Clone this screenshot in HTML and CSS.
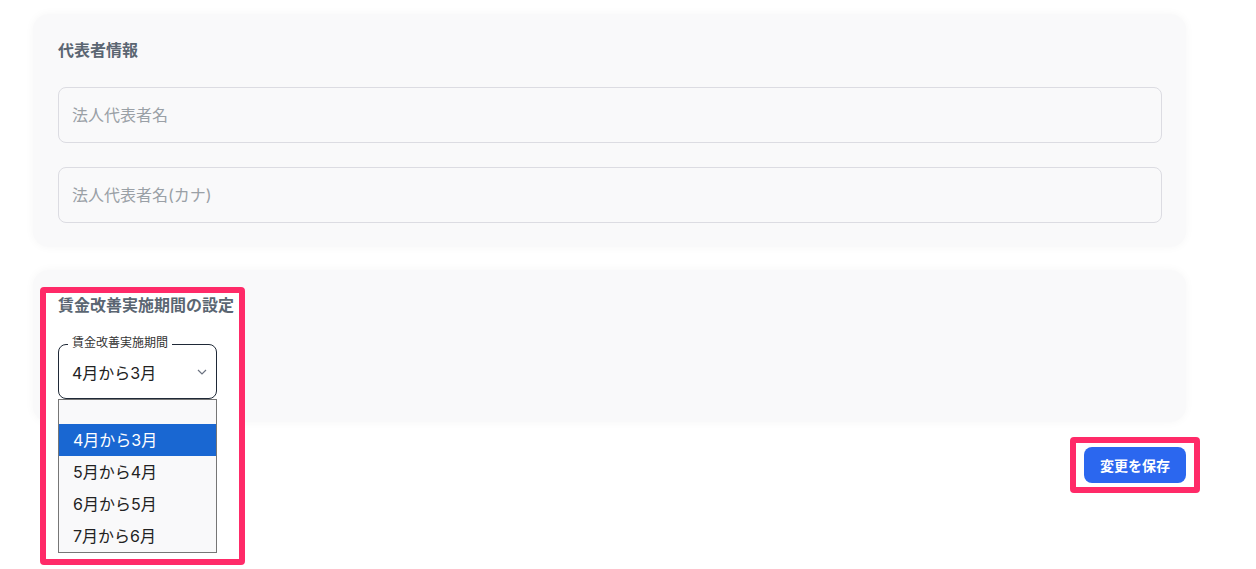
FILE: index.html
```html
<!DOCTYPE html>
<html>
<head>
    <title>設定</title>
    <link rel="stylesheet" href="styles.css">
</head>
<body>
    <div class="page">
        <section class="card">
            <h3 class="card-title">代表者情報</h3>
            <div class="field">
                <input type="text" placeholder="法人代表者名">
            </div>
            <div class="field">
                <input type="text" placeholder="法人代表者名(カナ)">
            </div>
        </section>

        <section class="card card-period">
            <h3 class="card-title above">賃金改善実施期間の設定</h3>
            <div class="select-wrap above">
                <span class="select-label">賃金改善実施期間</span>
                <div class="select-box">
                    <span class="select-value">4月から3月</span>
                    <svg class="chevron" width="10" height="6" viewBox="0 0 10 6">
                        <path d="M1 1l4 4 4-4" fill="none" stroke="#6b7280" stroke-width="1.2"/>
                    </svg>
                </div>
                <ul class="options">
                    <li class="option empty"></li>
                    <li class="option selected">4月から3月</li>
                    <li class="option">5月から4月</li>
                    <li class="option">6月から5月</li>
                    <li class="option">7月から6月</li>
                </ul>
            </div>
            <div class="mark mark-select"></div>
        </section>

        <div class="actions">
            <button class="save-btn above" type="button">変更を保存</button>
            <div class="mark mark-save"></div>
        </div>
    </div>
</body>
</html>
```

FILE: styles.css
```css
html,
body {
    height: 100%;
}

body {
    margin: 0;
    background: #fff;
    font-family: Inter, "Noto Sans CJK JP", sans-serif;
    color: #222;
}

.page {
    width: 1153px;
    padding: 14px 0 0 33px;
}

.card {
    background: #f9f9fa;
    border-radius: 16px;
    box-shadow: 0 0 10px rgba(0,0,0,0.04);
    padding: 26px 24px 24px 25px;
}

.card-title {
    margin: 0;
    font-size: 16px;
    line-height: 20px;
    font-weight: bold;
    color: #5b6672;
}

.field {
    margin-top: 27px;
}

.field + .field {
    margin-top: 24px;
}

.field input {
    display: block;
    box-sizing: border-box;
    width: 100%;
    height: 56px;
    padding: 0 13px;
    border: 1px solid #dcdce2;
    border-radius: 8px;
    background: #f9f9fa;
    font-family: inherit;
    font-size: 16px;
}

.field input::placeholder {
    color: #9aa0a6;
}

/* period card */
.card-period {
    margin-top: 23px;
    padding-top: 25px;
    padding-bottom: 23px;
    position: relative;
}

.above {
    position: relative;
    z-index: 2;
}

.select-wrap {
    width: 159px;
    margin-top: 29px;
}

.select-box {
    box-sizing: border-box;
    height: 55px;
    border: 1px solid #1f2937;
    border-radius: 8px;
    display: flex;
    align-items: center;
    justify-content: space-between;
    padding: 0 9px 0 13px;
}

.select-value {
    font-size: 16px;
}

.select-label {
    position: absolute;
    left: 10px;
    top: -9px;
    padding: 0 4px;
    background: #fff;
    font-size: 12px;
    line-height: 15px;
    color: #333;
}

.options {
    position: absolute;
    top: 55px;
    left: 0;
    width: 159px;
    box-sizing: border-box;
    margin: 0;
    padding: 0;
    list-style: none;
    border: 1px solid #767676;
    background: #f9f9fa;
}

.option {
    height: 32px;
    line-height: 32px;
    padding-left: 14px;
    font-size: 16px;
    color: #222;
}

.option.empty {
    height: 24px;
}

.option.selected {
    background: #1967d2;
    color: #fff;
}

/* annotation frames */
.mark {
    position: absolute;
    border: 6px solid #ff2a68;
    border-radius: 4px;
    background: #fff;
    pointer-events: none;
    z-index: 1;
}

.mark-select {
    left: 7px;
    top: 17px;
    width: 193px;
    height: 266px;
}

.actions {
    position: relative;
    display: flex;
    justify-content: flex-end;
    margin-top: 25px;
}

.save-btn {
    width: 102px;
    height: 36px;
    border: none;
    border-radius: 8px;
    background: #2b67ef;
    color: #fff;
    font-family: inherit;
    font-size: 14px;
    font-weight: bold;
    cursor: pointer;
}

.mark-save {
    right: -14px;
    top: -10px;
    width: 118px;
    height: 44px;
}
```
